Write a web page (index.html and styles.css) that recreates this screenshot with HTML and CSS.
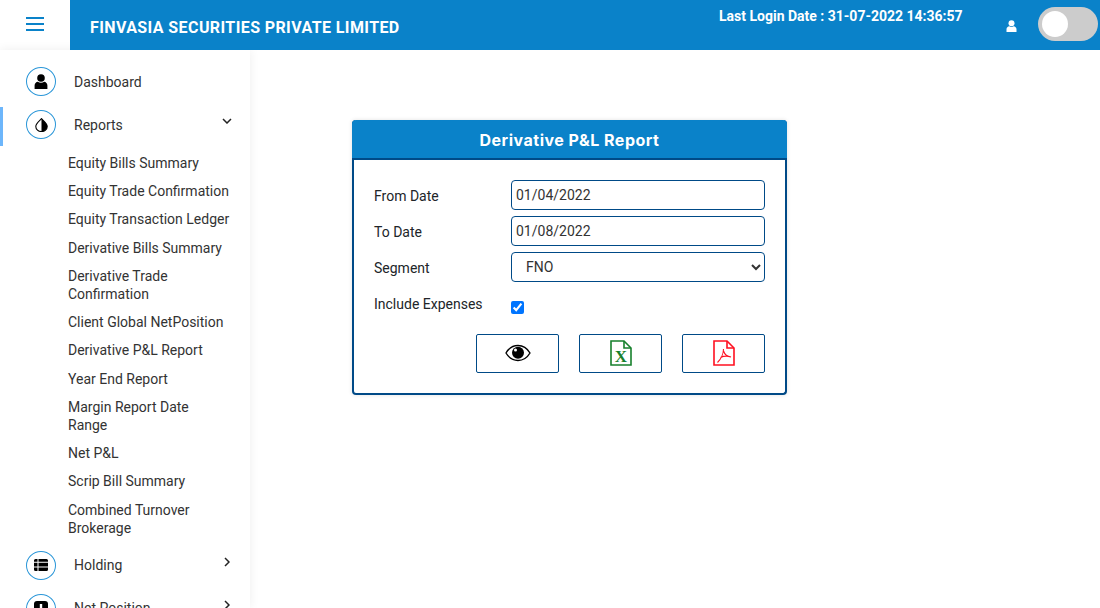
FILE: index.html
```html
<!DOCTYPE html>
<html lang="en">
<head>
    <meta charset="UTF-8">
    <meta name="viewport" content="width=device-width, initial-scale=1.0">
    <title>Derivative P&amp;L Report</title>
    <link rel="stylesheet" href="styles.css">
</head>
<body>

    <header class="topbar">
        <button class="menu-toggle" type="button" aria-label="Menu">
            <span></span><span></span><span></span>
        </button>
        <div class="brand-bar">
            <h1 class="brand">FINVASIA SECURITIES PRIVATE LIMITED</h1>
            <p class="last-login">Last Login Date : 31-07-2022 14:36:57</p>
            <svg class="user-icon" viewBox="1 0 10 12">
                <circle cx="6" cy="3.2" r="3" fill="#fff"/>
                <path d="M1 12V9.2C1 7.4 2.4 6.4 3.8 6.2 4.5 6.8 5.2 7 6 7s1.5-.2 2.2-.8C9.6 6.4 11 7.4 11 9.2V12z" fill="#fff"/>
            </svg>
            <div class="toggle"><span class="toggle-knob"></span></div>
        </div>
    </header>

    <div class="layout">
        <nav class="sidebar">
            <a class="nav-item" href="#">
                <span class="nav-icon">
                    <svg viewBox="0 0 14 15" width="14" height="15">
                        <circle cx="7" cy="4" r="3.8"/>
                        <path d="M.6 15v-3.4C.6 9.4 2.2 8 3.8 7.8 4.7 8.4 5.8 8.7 7 8.7s2.3-.3 3.2-.9c1.6.2 3.2 1.6 3.2 3.8V15z"/>
                    </svg>
                </span>
                <span class="nav-label">Dashboard</span>
            </a>

            <a class="nav-item active" href="#">
                <span class="nav-icon">
                    <svg viewBox="0 0 13 14" width="13" height="14">
                        <path d="M6.5.7C5 2.4.8 5.4.8 8.4a5.700 5.200 0 0 0 11.400 0C12.200 5.400 8 2.400 6.500.7z" fill="#fff" stroke="#000" stroke-width="1.100"/>
                        <path d="M6.500.7C8 2.400 12.200 5.400 12.200 8.400A5.700 5.200 0 0 1 6.500 13.600z"/>
                    </svg>
                </span>
                <span class="nav-label">Reports</span>
                <svg class="chevron down" viewBox="0 0 10 6" width="10" height="6"><path d="M1 1l4 4 4-4"/></svg>
            </a>

            <ul class="sub-menu">
                <li>Equity Bills Summary</li>
                <li>Equity Trade Confirmation</li>
                <li>Equity Transaction Ledger</li>
                <li>Derivative Bills Summary</li>
                <li>Derivative Trade Confirmation</li>
                <li>Client Global NetPosition</li>
                <li>Derivative P&amp;L Report</li>
                <li>Year End Report</li>
                <li>Margin Report Date Range</li>
                <li>Net P&amp;L</li>
                <li>Scrip Bill Summary</li>
                <li>Combined Turnover Brokerage</li>
            </ul>

            <a class="nav-item" href="#">
                <span class="nav-icon">
                    <svg viewBox="0 0 14 12" width="14" height="12">
                        <path d="M0 1.500A1.500 1.500 0 0 1 1.500 0h2v2.800H0zM4.500 0h8A1.500 1.500 0 0 1 14 1.500v1.300H4.500zM0 3.800h3.500v3.700H0zM4.500 3.800H14v3.700H4.500zM0 8.500h3.500V12h-2A1.500 1.500 0 0 1 0 10.500zM4.500 8.500H14v2A1.500 1.500 0 0 1 12.500 12h-8z"/>
                    </svg>
                </span>
                <span class="nav-label">Holding</span>
                <svg class="chevron" viewBox="0 0 6 10" width="6" height="10"><path d="M1 1l4 4-4 4"/></svg>
            </a>

            <a class="nav-item" href="#">
                <span class="nav-icon">
                    <svg viewBox="0 0 14 14" width="14" height="14">
                        <rect width="14" height="14" rx="3"/>
                        <rect x="5.800" y="3" width="2.400" height="5" fill="#fff"/>
                        <rect x="5.800" y="9.500" width="2.400" height="2.400" fill="#fff"/>
                    </svg>
                </span>
                <span class="nav-label">Net Position</span>
                <svg class="chevron" viewBox="0 0 6 10" width="6" height="10"><path d="M1 1l4 4-4 4"/></svg>
            </a>
        </nav>

        <main class="content">
            <section class="report-card">
                <h2 class="report-title">Derivative P&amp;L Report</h2>
                <form class="report-form">
                    <label for="from-date">From Date</label>
                    <input id="from-date" type="text" value="01/04/2022">

                    <label for="to-date">To Date</label>
                    <input id="to-date" type="text" value="01/08/2022">

                    <label for="segment">Segment</label>
                    <select id="segment">
                        <option>FNO</option>
                    </select>

                    <label class="expenses-label" for="expenses">Include Expenses</label>
                    <input id="expenses" type="checkbox" checked>

                    <div class="actions">
                        <button type="button" aria-label="View">
                            <svg viewBox="0 0 26 18" width="26" height="18">
                                <path d="M1 9C4 4 8 1.500 13 1.500S22 4 25 9c-3 5-7 7.500-12 7.500S4 14 1 9z" fill="#fff" stroke="#000" stroke-width="1.400"/>
                                <circle cx="13" cy="8.800" r="6"/>
                                <circle cx="10.500" cy="6" r="1.500" fill="#fff"/>
                            </svg>
                        </button>
                        <button type="button" aria-label="Excel">
                            <svg viewBox="0 0 22 26" width="22" height="26">
                                <path d="M1 1H14L21 8V25H1z" fill="#fff" stroke="#17802c" stroke-width="1.600"/>
                                <path d="M14 1V8H21" fill="none" stroke="#17802c" stroke-width="1.600"/>
                                <text x="11" y="22" class="excel-mark">X</text>
                            </svg>
                        </button>
                        <button type="button" aria-label="PDF">
                            <svg viewBox="0 0 22 26" width="22" height="26">
                                <path d="M1 1H14L21 8V25H1z" fill="#fff" stroke="#ff1020" stroke-width="1.600"/>
                                <path d="M14 1V8H21" fill="none" stroke="#ff1020" stroke-width="1.600"/>
                                <path d="M10.500 9C10.500 13 8 19 4.500 22.500M7.500 17.500C10.500 16 14 15.500 18 17M10.500 11C11.500 14 13.500 16.500 18 17" fill="none" stroke="#ff1020" stroke-width="1.100"/>
                            </svg>
                        </button>
                    </div>
                </form>
            </section>
        </main>
    </div>

</body>
</html>
```

FILE: styles.css
```css
* {
    box-sizing: border-box;
}

html, body {
    height: 100%;
}

body {
    margin: 0;
    overflow: hidden;
    background: #fff;
    color: #212529;
    font-family: Roboto, "Liberation Sans", sans-serif;
    font-size: 14px;
}

/* top bar */
.topbar {
    display: flex;
    height: 50px;
}

.menu-toggle {
    display: flex;
    flex-direction: column;
    justify-content: center;
    gap: 4px;
    width: 70px;
    padding: 0 0 2px 26px;
    border: none;
    background: #fff;
}

.menu-toggle span {
    display: block;
    width: 18px;
    height: 2px;
    background: #0a82c9;
}

.brand-bar {
    flex: 1;
    position: relative;
    display: flex;
    background: #0a82c9;
    color: #fff;
}

.brand {
    margin: 0 0 0 20px;
    font-size: 16px;
    font-weight: 700;
    line-height: 56px;
    letter-spacing: 0.4px;
}

.last-login {
    position: absolute;
    left: 649px;
    top: 8px;
    margin: 0;
    font-size: 14px;
    font-weight: 700;
    line-height: 16px;
}

.user-icon {
    position: absolute;
    left: 936px;
    top: 20px;
    width: 11px;
    height: 12px;
}

.toggle {
    position: absolute;
    left: 968px;
    top: 7px;
    width: 60px;
    height: 34px;
    border-radius: 17px;
    background: #ccc;
}

.toggle-knob {
    position: absolute;
    left: 4px;
    top: 4px;
    width: 26px;
    height: 26px;
    border-radius: 50%;
    background: #fff;
}

/* sidebar */
.layout {
    display: flex;
    height: 558px;
}

.sidebar {
    flex: none;
    width: 250px;
    height: 100%;
    overflow: hidden;
    box-shadow: 0 0 10px rgba(0, 0, 0, 0.07);
    padding-top: 10px;
}

.nav-item {
    position: relative;
    display: flex;
    align-items: center;
    height: 43px;
    padding-left: 26px;
    color: #333;
    text-decoration: none;
}

.nav-item.active::before {
    content: "";
    position: absolute;
    left: 0;
    top: 4px;
    width: 3px;
    height: 39px;
    background: #6db6fb;
}

.nav-icon {
    display: flex;
    align-items: center;
    justify-content: center;
    flex: none;
    width: 30px;
    height: 29px;
    border: 1px solid #2a96d8;
    border-radius: 50%;
    margin-right: 18px;
}

.nav-label {
    font-size: 14px;
}

.chevron {
    position: absolute;
    left: 224px;
    top: 13px;
    fill: none;
    stroke: #222;
    stroke-width: 1.5;
}

.chevron.down {
    left: 222px;
    top: 15px;
}

.sub-menu {
    list-style: none;
    margin: 0;
    padding: 2.75px 0 1.75px 68px;
}

.sub-menu li {
    padding: 5px 20px 5.25px 0;
    color: #333;
    font-size: 14px;
    line-height: 18px;
}

/* report card */
.content {
    flex: 1;
    padding: 70px 0 0 102px;
}

.report-card {
    width: 435px;
    height: 275px;
    border: 2px solid #004a87;
    border-top: none;
    border-radius: 4px;
    box-shadow: 0 0 4px rgba(0, 0, 0, 0.12);
}

.report-title {
    height: 40px;
    margin: 0 -2px;
    border-radius: 4px 4px 0 0;
    border-bottom: 2px solid #004a87;
    background: #0a82c9;
    color: #fff;
    font-family: Inter, Roboto, sans-serif;
    font-size: 16px;
    font-weight: 700;
    line-height: 41px;
    letter-spacing: 0.5px;
    text-align: center;
}

.report-form {
    display: grid;
    grid-template-columns: 137px 254px;
    grid-auto-rows: 30px;
    row-gap: 6px;
    align-items: center;
    padding: 20px 0 0 20px;
}

.report-form label {
    margin-top: 2px;
    color: #212529;
}

.report-form input[type="text"],
.report-form select {
    width: 100%;
    height: 30px;
    padding: 0 4px;
    border: 1px solid #004a87;
    border-radius: 4px;
    background: #fff;
    color: #333;
    font-family: inherit;
    font-size: 14px;
}

.report-form select {
    padding-left: 10px;
}

.report-form .expenses-label {
    align-self: start;
    margin-top: 0;
    padding-top: 8px;
}

#expenses {
    width: 13px;
    height: 13px;
    margin: 8px 0 0;
    accent-color: #0075ff;
}

.actions {
    grid-column: 1 / 3;
    display: flex;
    justify-content: flex-end;
    gap: 20px;
    height: 39px;
    margin-top: 28px;
}

.actions button {
    display: flex;
    align-items: center;
    justify-content: center;
    width: 83px;
    height: 39px;
    padding: 0;
    border: 1px solid #004a87;
    border-radius: 2px;
    background: #fff;
}

.excel-mark {
    fill: #17802c;
    font-family: "Liberation Serif", serif;
    font-size: 17px;
    font-weight: 700;
    text-anchor: middle;
}
```
